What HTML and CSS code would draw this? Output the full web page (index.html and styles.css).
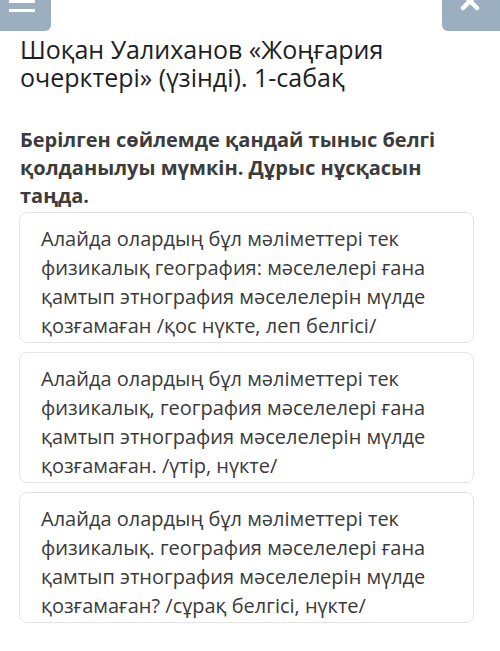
FILE: index.html
```html
<!DOCTYPE html>
<html lang="kk">
<head>
<meta charset="utf-8">
<link rel="stylesheet" href="styles.css">
</head>
<body>
<div class="topbar">
  <div class="btn btn-menu">
    <span class="bar"></span>
    <span class="bar"></span>
  </div>
  <div class="btn btn-close">
    <svg width="20" height="14" viewBox="0 0 20 14"><path d="M3 -6 L17 8 M17 -6 L3 8" stroke="#fff" stroke-width="4.5" stroke-linecap="round"/></svg>
  </div>
</div>
<h1 class="title">Шоқан Уалиханов «Жоңғария очерктері» (үзінді). 1-сабақ</h1>
<p class="question">Берілген сөйлемде қандай тыныс белгі қолданылуы мүмкін. Дұрыс нұсқасын таңда.</p>
<div class="options">
  <div class="option">Алайда олардың бұл мәліметтері тек физикалық география: мәселелері ғана қамтып этнография мәселелерін мүлде қозғамаған /қос нүкте, леп белгісі/</div>
  <div class="option">Алайда олардың бұл мәліметтері тек физикалық, география мәселелері ғана қамтып этнография мәселелерін мүлде қозғамаған. /үтір, нүкте/</div>
  <div class="option">Алайда олардың бұл мәліметтері тек физикалық. география мәселелері ғана қамтып этнография мәселелерін мүлде қозғамаған? /сұрақ белгісі, нүкте/</div>
</div>
</body>
</html>
```
FILE: styles.css
```css
html, body {
  margin: 0;
  padding: 0;
  background: #fff;
}
body {
  font-family: "Open Sans", "Noto Sans", sans-serif;
  width: 500px;
  height: 651px;
  overflow: hidden;
}
.topbar {
  display: flex;
  justify-content: space-between;
  height: 31px;
}
.btn {
  background: #9bafc0;
  height: 31px;
  display: flex;
  flex-direction: column;
}
.btn-menu {
  width: 51px;
  border-bottom-right-radius: 6px;
  padding-left: 9px;
  box-sizing: border-box;
}
.bar {
  display: block;
  width: 26px;
  height: 3px;
  background: #fff;
  margin-bottom: 6px;
}
.btn-close {
  width: 58px;
  border-bottom-left-radius: 6px;
  align-items: center;
}
.btn-close svg {
  display: block;
  margin-left: -2px;
}
.title {
  margin: 4px 0 0 20px;
  font-size: 25px;
  line-height: 28px;
  font-weight: 400;
  color: #1e1e1e;
  width: 420px;
}
.question {
  margin: 35px 0 0 20px;
  font-size: 20px;
  line-height: 28px;
  font-weight: 700;
  color: #3c3c3c;
  width: 450px;
}
.options {
  margin: 2px 0 0 19px;
  width: 455px;
  display: flex;
  flex-direction: column;
  gap: 9px;
}
.option {
  box-sizing: border-box;
  height: 131px;
  border: 1px solid #e4e4e4;
  border-radius: 8px;
  padding: 11px 20px 0 21px;
  font-size: 20px;
  line-height: 29px;
  color: #3a3a3a;
}
```
